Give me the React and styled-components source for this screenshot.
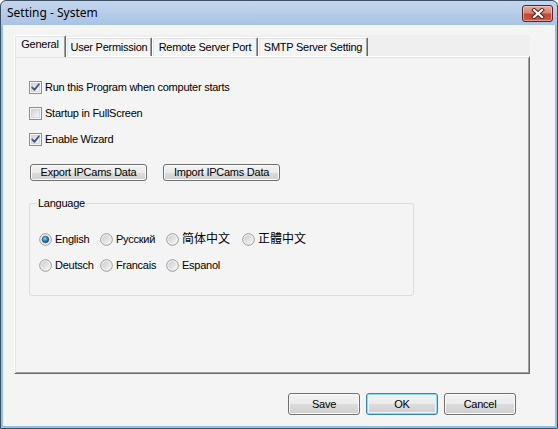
import React from 'react';
import styled, { createGlobalStyle } from 'styled-components';

const Global = createGlobalStyle`
  html, body { margin: 0; padding: 0; background: #ffffff; }
  body { width: 558px; height: 429px; overflow: hidden; }
  * { box-sizing: border-box; }
`;

const UI = `"Liberation Sans", Arial, sans-serif`;
const CJK = `"Liberation Sans", "Noto Sans CJK SC", "Noto Sans CJK TC", sans-serif`;

const Window = styled.div`
  width: 558px;
  height: 429px;
  display: flex;
  flex-direction: column;
  border: 1px solid #3d4f63;
  border-radius: 6px 6px 0 0;
  padding: 0 2px 2px;
  background: linear-gradient(to bottom, #c3d6ee 0px, #a9c3e3 24px, #8fc1ea 24px, #8fc1ea 100%);
`;

const TitleBar = styled.div`
  height: 24px;
  flex: none;
  display: flex;
  align-items: flex-start;
  justify-content: space-between;
  padding: 0 2px 0 4px;
`;

const Title = styled.span`
  font-family: "Noto Sans", "Open Sans", sans-serif;
  font-size: 12px;
  line-height: 16px;
  margin-top: 4px;
  color: #000;
`;

const CloseButton = styled.div`
  width: 31px;
  height: 17px;
  margin-top: 4px;
  border: 1px solid #5a2222;
  border-radius: 3px;
  background: linear-gradient(to bottom, #e9aa9a 0%, #d98474 45%, #c9452f 55%, #c65a45 100%);
  box-shadow: inset 0 0 0 1px rgba(255, 220, 210, 0.55);
  display: flex;
  align-items: center;
  justify-content: center;
`;

const Client = styled.div`
  flex: 1;
  background: #f4f4f4;
  display: flex;
  flex-direction: column;
  padding: 10px 25px 0 11px;
  font-family: ${UI};
  font-size: 11px;
  letter-spacing: -0.25px;
  color: #000;
`;

const TabControl = styled.div`
  width: 516px;
  display: flex;
  flex-direction: column;
`;

const TabStrip = styled.div`
  height: 21px;
  display: flex;
  align-items: flex-end;
  background: #efefef;
`;

const Tab = styled.div`
  position: relative;
  z-index: ${p => (p.$active ? 2 : 1)};
  width: ${p => p.$w}px;
  height: ${p => (p.$active ? 22 : 19)}px;
  margin-bottom: ${p => (p.$active ? -1 : 0)}px;
  background: #f4f4f4;
  border-top: 1px solid #ffffff;
  border-left: 1px solid #ffffff;
  border-right: 1px solid #696969;
  box-shadow: inset -1px 0 0 #a0a0a0, inset 1px 1px 0 #e3e3e3;
  border-radius: 2px 2px 0 0;
  display: flex;
  align-items: ${p => (p.$active ? 'flex-start' : 'center')};
  justify-content: center;
  padding-top: ${p => (p.$active ? 2 : 1)}px;
  line-height: 13px;
  white-space: nowrap;
`;

const Panel = styled.div`
  height: 318px;
  border-top: 1px solid #ffffff;
  border-left: 1px solid #ffffff;
  border-right: 1px solid #696969;
  border-bottom: 1px solid #696969;
  box-shadow: inset 1px 1px 0 #e3e3e3, inset -1px -1px 0 #a0a0a0;
  display: flex;
  flex-direction: column;
  align-items: flex-start;
  padding: 24px 0 0 14px;
`;

const CheckList = styled.div`
  display: flex;
  flex-direction: column;
  gap: 13px;
`;

const Row = styled.label`
  display: flex;
  align-items: center;
  height: 13px;
  gap: 3px;
  white-space: nowrap;
  line-height: 13px;
`;

const Label = styled.span`
  font-family: ${p => (p.$cjk ? CJK : UI)};
  font-size: ${p => (p.$cjk ? 12 : 11)}px;
  letter-spacing: ${p => (p.$cjk ? 0 : -0.25)}px;
`;

const DataButtons = styled.div`
  display: flex;
  gap: 16px;
  margin-top: 18px;
  margin-left: 1px;
`;

const WinButton = styled.button`
  width: ${p => p.$w}px;
  height: ${p => p.$h}px;
  padding: 0;
  margin: 0;
  font-family: ${UI};
  font-size: 11px;
  letter-spacing: -0.25px;
  line-height: 11px;
  color: #000;
  border: 1px solid ${p => (p.$default ? '#3c7fb1' : '#707070')};
  border-radius: 3px;
  background: linear-gradient(to bottom, #f2f2f2 0%, #ebebeb 50%, #dddddd 51%, #cfcfcf 100%);
  box-shadow: ${p => (p.$default ? 'inset 0 0 0 1px #8fd8f6, inset 0 0 0 2px #e6f6fd' : 'inset 0 0 0 1px #fbfbfb')};
  display: flex;
  align-items: center;
  justify-content: center;
`;

const Group = styled.fieldset`
  width: 385px;
  margin: 16px 0 0 0;
  padding: 23px 0 23px 9px;
  border: 1px solid #d5dfe5;
  border-radius: 3px;
  min-width: 0;
`;

const Legend = styled.legend`
  margin-left: -2px;
  padding: 0 1px;
  line-height: 13px;
  font-size: 11px;
`;

const RadioGrid = styled.div`
  display: grid;
  grid-template-columns: 61px 66px 76px auto;
  row-gap: 13px;
`;

const Footer = styled.div`
  display: flex;
  justify-content: flex-end;
  gap: 6px;
  margin-top: 19px;
  padding-right: 14px;
`;

function CheckBox({ checked }) {
  return (
    <svg width="13" height="13" viewBox="0 0 13 13">
      <defs>
        <linearGradient id="cbg" x1="0" y1="0" x2="1" y2="1">
          <stop offset="0" stopColor="#cfd3d9" />
          <stop offset="1" stopColor="#f7f7f8" />
        </linearGradient>
      </defs>
      <rect x="0.5" y="0.5" width="12" height="12" fill="#f5f5f5" stroke="#8e8f8f" />
      <rect x="2.5" y="2.5" width="8" height="8" fill="url(#cbg)" stroke="#c3c6cb" strokeWidth="0.6" />
      {checked && (
        <path d="M3.2 6.4 L5.4 8.9 L9.9 3.3" fill="none" stroke="#41558b" strokeWidth="1.8" strokeLinecap="round" strokeLinejoin="round" />
      )}
    </svg>
  );
}

function Radio({ checked }) {
  return (
    <svg width="13" height="13" viewBox="0 0 13 13">
      <defs>
        <linearGradient id="rbg" x1="0" y1="0" x2="1" y2="1">
          <stop offset="0" stopColor="#c9ccd1" />
          <stop offset="1" stopColor="#f6f6f6" />
        </linearGradient>
        <radialGradient id="rdot" cx="0.4" cy="0.35" r="0.7">
          <stop offset="0" stopColor="#8fdcff" />
          <stop offset="0.45" stopColor="#2c8fd0" />
          <stop offset="1" stopColor="#0b3f73" />
        </radialGradient>
      </defs>
      <circle cx="6.5" cy="6.5" r="5.8" fill="#f3f3f3" stroke="#8e8f8f" strokeWidth="0.9" />
      <circle cx="6.5" cy="6.5" r="4.2" fill="url(#rbg)" />
      {checked && <circle cx="6.5" cy="6.5" r="3.3" fill="url(#rdot)" stroke="#1b4a7a" strokeWidth="0.6" />}
    </svg>
  );
}

function CloseGlyph() {
  return (
    <svg width="14" height="11" viewBox="0 0 14 11">
      <path d="M3 2 L11 9 M11 2 L3 9" stroke="#4a2020" strokeWidth="4" strokeLinecap="square" />
      <path d="M3 2 L11 9 M11 2 L3 9" stroke="#ffffff" strokeWidth="2.2" strokeLinecap="square" />
    </svg>
  );
}

const tabs = [
  { label: 'General', w: 52, active: true },
  { label: 'User Permission', w: 86 },
  { label: 'Remote Server Port', w: 106 },
  { label: 'SMTP Server Setting', w: 110 },
];

const checks = [
  { label: 'Run this Program when computer starts', checked: true },
  { label: 'Startup in FullScreen', checked: false },
  { label: 'Enable Wizard', checked: true },
];

const languages = [
  { label: 'English', checked: true },
  { label: 'Русский' },
  { label: '简体中文', cjk: true },
  { label: '正體中文', cjk: true },
  { label: 'Deutsch' },
  { label: 'Francais' },
  { label: 'Espanol' },
];

export default function App() {
  return (
    <>
      <Global />
      <Window>
        <TitleBar>
          <Title>Setting - System</Title>
          <CloseButton>
            <CloseGlyph />
          </CloseButton>
        </TitleBar>
        <Client>
          <TabControl>
            <TabStrip>
              {tabs.map(t => (
                <Tab key={t.label} $w={t.w} $active={t.active}>
                  {t.label}
                </Tab>
              ))}
            </TabStrip>
            <Panel>
              <CheckList>
                {checks.map(c => (
                  <Row key={c.label}>
                    <CheckBox checked={c.checked} />
                    <Label>{c.label}</Label>
                  </Row>
                ))}
              </CheckList>
              <DataButtons>
                <WinButton $w={117} $h={17}>Export IPCams Data</WinButton>
                <WinButton $w={117} $h={17}>Import IPCams Data</WinButton>
              </DataButtons>
              <Group>
                <Legend>Language</Legend>
                <RadioGrid>
                  {languages.map(l => (
                    <Row key={l.label}>
                      <Radio checked={l.checked} />
                      <Label $cjk={l.cjk}>{l.label}</Label>
                    </Row>
                  ))}
                </RadioGrid>
              </Group>
            </Panel>
          </TabControl>
          <Footer>
            <WinButton $w={72} $h={22}>Save</WinButton>
            <WinButton $w={72} $h={22} $default>OK</WinButton>
            <WinButton $w={72} $h={22}>Cancel</WinButton>
          </Footer>
        </Client>
      </Window>
    </>
  );
}
